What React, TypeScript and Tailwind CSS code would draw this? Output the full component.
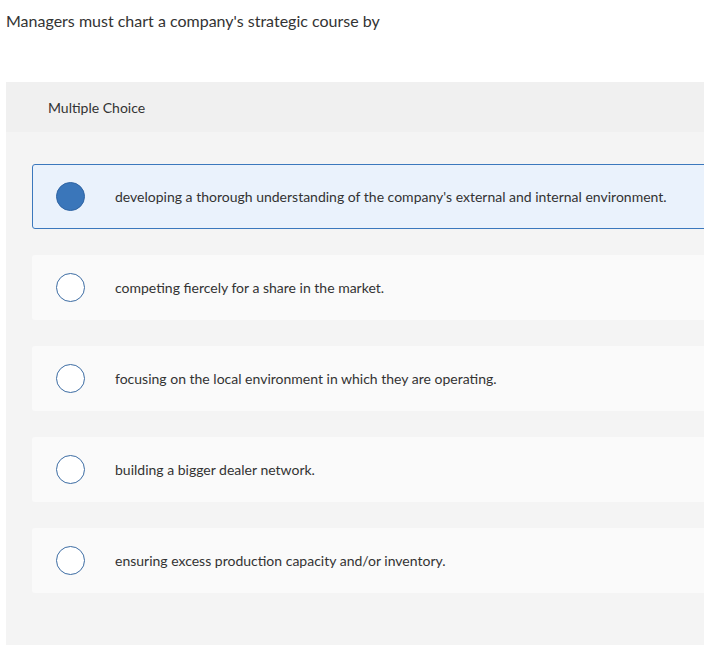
const options = [
  "developing a thorough understanding of the company's external and internal environment.",
  "competing fiercely for a share in the market.",
  "focusing on the local environment in which they are operating.",
  "building a bigger dealer network.",
  "ensuring excess production capacity and/or inventory.",
];

export default function App() {
  const selected = 0;
  return (
    <div
      className="w-[704px] h-[645px] overflow-hidden bg-white text-[#333333]"
      style={{ fontFamily: "Lato, 'Open Sans', sans-serif" }}
    >
      <p className="pl-[6px] pt-[10px] text-[16px] leading-[22px] h-[82px]">
        Managers must chart a company's strategic course by
      </p>
      <div className="ml-[6px] w-[760px] h-[563px] bg-[#f4f4f4]">
        <div className="h-[50px] bg-[#f0f0f0] pl-[42px] flex items-center text-[14px]">
          Multiple Choice
        </div>
        <div className="pl-[26px] pt-[32px] flex flex-col gap-[26px]">
          {options.map((o, i) => {
            const on = i === selected;
            return (
              <div
                key={i}
                className={
                  on
                    ? "h-[65px] flex items-center rounded-[3px] border border-[#3b78bd] bg-[#eaf2fc]"
                    : "h-[65px] flex items-center rounded-[3px] border border-transparent bg-[#fafafa]"
                }
              >
                <span
                  className={
                    on
                      ? "ml-[23px] w-[29px] h-[29px] rounded-full bg-[#3a76ba] border border-[#2f64a3] shrink-0"
                      : "ml-[23px] w-[29px] h-[29px] rounded-full bg-white border-[1.5px] border-[#3c6ca3] shrink-0"
                  }
                />
                <span className="ml-[30px] text-[14px]">{o}</span>
              </div>
            );
          })}
        </div>
      </div>
    </div>
  );
}
